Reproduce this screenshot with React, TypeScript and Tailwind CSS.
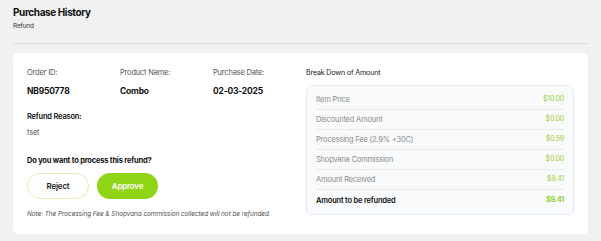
import React from 'react'

const rows = [
  { label: 'Item Price', value: '$10.00' },
  { label: 'Discounted Amount', value: '$0.00' },
  { label: 'Processing Fee (2.9% +30C)', value: '$0.59' },
  { label: 'Shopvana Commission', value: '$0.00' },
  { label: 'Amount Received', value: '$9.41' },
]

const Field = ({ label, value, width }: { label: string; value: string; width: string }) => (
  <div className={`flex flex-col ${width}`}>
    <span className="text-[7.5px] text-[#555] leading-none">{label}</span>
    <span className="mt-[10px] text-[8.5px] font-bold text-[#111] leading-none">{value}</span>
  </div>
)

export default function App() {
  return (
    <div className="w-[601px] h-[241px] bg-[#f1f1f1] px-[13px] pt-[5px] font-['Inter',sans-serif] tracking-[-0.2px]">
      <h1 className="text-[10px] font-bold text-[#111] leading-[14px] tracking-[-0.4px]">Purchase History</h1>
      <p className="mt-[3px] text-[6.5px] text-[#333] leading-[8px]">Refund</p>
      <div className="mt-[13px] h-px w-[575px] bg-[#dcdcdc]" />
      <div className="mt-[9px] w-[575px] h-[181px] bg-white rounded-[5px] flex pl-[14px] pr-[14px] pt-[16px]">
        <div className="w-[279px] flex flex-col">
          <div className="flex">
            <Field label="Order ID:" value="NB950778" width="w-[93px]" />
            <Field label="Product Name:" value="Combo" width="w-[93px]" />
            <Field label="Purchase Date:" value="02-03-2025" width="w-[79px]" />
          </div>
          <span className="mt-[18px] text-[7.5px] font-semibold text-[#111] leading-none">Refund Reason:</span>
          <span className="mt-[8px] text-[7.5px] text-[#555] leading-none">tset</span>
          <span className="mt-[21px] text-[7.5px] font-bold text-[#111] leading-none">Do you want to process this refund?</span>
          <div className="mt-[8px] flex gap-[8px]">
            <button className="w-[62px] h-[26px] rounded-full border border-[#d9f0b0] bg-white text-[8px] font-semibold text-[#222]">Reject</button>
            <button className="w-[61px] h-[26px] rounded-full bg-[#8fd415] text-[8px] font-semibold text-white">Approve</button>
          </div>
          <p className="mt-[12px] text-[6.5px] italic text-[#555] leading-none tracking-[-0.1px]">Note: The Processing Fee &amp; Shopvana commission collected will not be refunded.</p>
        </div>
        <div className="w-[268px] flex flex-col">
          <span className="text-[7.2px] text-[#222] leading-none">Break Down of Amount</span>
          <div className="mt-[9px] rounded-[6px] border border-[#e3ebf2] bg-[#f9fafb] px-[9px] py-[4px] flex flex-col">
            {rows.map(r => (
              <div key={r.label} className="h-[20px] flex items-center justify-between border-b border-[#e8eaec]">
                <span className="text-[7.5px] text-[#8a8a8a]">{r.label}</span>
                <span className="text-[7px] text-[#9ccf3a]">{r.value}</span>
              </div>
            ))}
            <div className="h-[20px] flex items-center justify-between">
              <span className="text-[7.5px] font-semibold text-[#111]">Amount to be refunded</span>
              <span className="text-[7px] font-bold text-[#8fcf2a]">$9.41</span>
            </div>
          </div>
        </div>
      </div>
    </div>
  )
}
